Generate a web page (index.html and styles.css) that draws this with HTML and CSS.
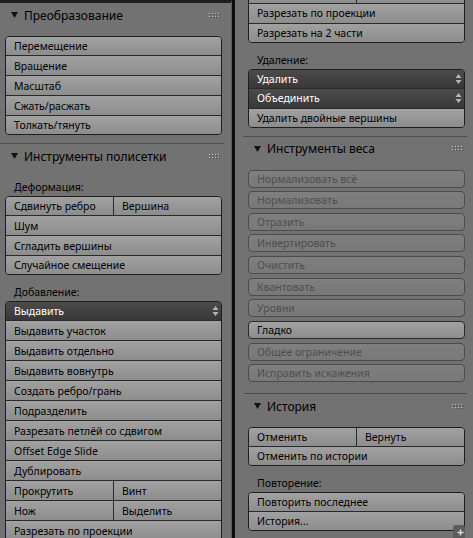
FILE: index.html
```html
<!DOCTYPE html>
<html lang="ru">
<head>
    <meta charset="UTF-8">
    <meta name="viewport" content="width=device-width, initial-scale=1.0">
    <title>Панель инструментов</title>
    <link rel="stylesheet" href="styles.css">
</head>
<body>
<div class="screen">

    <!-- left tool shelf: top of the list -->
    <div class="area area-left">
        <div class="shelf">
            <section class="panel panel-first">
                <header class="panel-head">
                    <svg class="tri" width="7" height="6" viewBox="0 0 7 6"><polygon points="0,0 7,0 3.5,6" /></svg>
                    <span class="panel-title">Преобразование</span>
                    <svg class="grip" width="11" height="5" viewBox="0 0 11 5">
                        <g fill="#4c4c4c"><rect x="1" y="1" width="1" height="1"/><rect x="4" y="1" width="1" height="1"/><rect x="7" y="1" width="1" height="1"/><rect x="10" y="1" width="1" height="1"/><rect x="1" y="4" width="1" height="1"/><rect x="4" y="4" width="1" height="1"/><rect x="7" y="4" width="1" height="1"/><rect x="10" y="4" width="1" height="1"/></g>
                        <g fill="#c4c4c4"><rect x="0" y="0" width="1" height="1"/><rect x="3" y="0" width="1" height="1"/><rect x="6" y="0" width="1" height="1"/><rect x="9" y="0" width="1" height="1"/><rect x="0" y="3" width="1" height="1"/><rect x="3" y="3" width="1" height="1"/><rect x="6" y="3" width="1" height="1"/><rect x="9" y="3" width="1" height="1"/></g>
                    </svg>
                </header>
                <div class="panel-body">
                    <div class="stack">
                        <div class="btn">Перемещение</div>
                        <div class="btn">Вращение</div>
                        <div class="btn">Масштаб</div>
                        <div class="btn">Сжать/расжать</div>
                        <div class="btn">Толкать/тянуть</div>
                    </div>
                </div>
            </section>

            <section class="panel">
                <header class="panel-head">
                    <svg class="tri" width="7" height="6" viewBox="0 0 7 6"><polygon points="0,0 7,0 3.5,6" /></svg>
                    <span class="panel-title">Инструменты полисетки</span>
                    <svg class="grip" width="11" height="5" viewBox="0 0 11 5">
                        <g fill="#4c4c4c"><rect x="1" y="1" width="1" height="1"/><rect x="4" y="1" width="1" height="1"/><rect x="7" y="1" width="1" height="1"/><rect x="10" y="1" width="1" height="1"/><rect x="1" y="4" width="1" height="1"/><rect x="4" y="4" width="1" height="1"/><rect x="7" y="4" width="1" height="1"/><rect x="10" y="4" width="1" height="1"/></g>
                        <g fill="#c4c4c4"><rect x="0" y="0" width="1" height="1"/><rect x="3" y="0" width="1" height="1"/><rect x="6" y="0" width="1" height="1"/><rect x="9" y="0" width="1" height="1"/><rect x="0" y="3" width="1" height="1"/><rect x="3" y="3" width="1" height="1"/><rect x="6" y="3" width="1" height="1"/><rect x="9" y="3" width="1" height="1"/></g>
                    </svg>
                </header>
                <div class="panel-body">
                    <div class="label">Деформация:</div>
                    <div class="stack">
                        <div class="row">
                            <div class="btn">Сдвинуть ребро</div>
                            <div class="btn">Вершина</div>
                        </div>
                        <div class="btn">Шум</div>
                        <div class="btn">Сгладить вершины</div>
                        <div class="btn">Случайное смещение</div>
                    </div>

                    <div class="label">Добавление:</div>
                    <div class="stack">
                        <div class="btn menu">
                            <span>Выдавить</span>
                            <svg class="updown" width="7" height="12" viewBox="0 0 7 12"><polygon points="0.5,5 3.5,1 6.5,5" /><polygon points="0.5,7 3.5,11 6.5,7" /></svg>
                        </div>
                        <div class="btn">Выдавить участок</div>
                        <div class="btn">Выдавить отдельно</div>
                        <div class="btn">Выдавить вовнутрь</div>
                        <div class="btn">Создать ребро/грань</div>
                        <div class="btn">Подразделить</div>
                        <div class="btn">Разрезать петлёй со сдвигом</div>
                        <div class="btn">Offset Edge Slide</div>
                        <div class="btn">Дублировать</div>
                        <div class="row">
                            <div class="btn">Прокрутить</div>
                            <div class="btn">Винт</div>
                        </div>
                        <div class="row">
                            <div class="btn">Нож</div>
                            <div class="btn">Выделить</div>
                        </div>
                        <div class="btn">Разрезать по проекции</div>
                        <div class="btn">Разрезать на 2 части</div>
                    </div>
                </div>
            </section>
        </div>
    </div>

    <div class="area-split"></div>

    <!-- right tool shelf: same list scrolled further down -->
    <div class="area area-right">
        <div class="shelf shelf-scrolled">
            <section class="panel panel-cont">
                <div class="stack">
                    <div class="row">
                        <div class="btn">Нож</div>
                        <div class="btn">Выделить</div>
                    </div>
                    <div class="btn">Разрезать по проекции</div>
                    <div class="btn">Разрезать на 2 части</div>
                </div>

                <div class="label">Удаление:</div>
                <div class="stack">
                    <div class="btn menu">
                        <span>Удалить</span>
                        <svg class="updown" width="7" height="12" viewBox="0 0 7 12"><polygon points="0.5,5 3.5,1 6.5,5" /><polygon points="0.5,7 3.5,11 6.5,7" /></svg>
                    </div>
                    <div class="btn menu">
                        <span>Объединить</span>
                        <svg class="updown" width="7" height="12" viewBox="0 0 7 12"><polygon points="0.5,5 3.5,1 6.5,5" /><polygon points="0.5,7 3.5,11 6.5,7" /></svg>
                    </div>
                    <div class="btn">Удалить двойные вершины</div>
                </div>
            </section>

            <section class="panel">
                <header class="panel-head">
                    <svg class="tri" width="7" height="6" viewBox="0 0 7 6"><polygon points="0,0 7,0 3.5,6" /></svg>
                    <span class="panel-title">Инструменты веса</span>
                    <svg class="grip" width="11" height="5" viewBox="0 0 11 5">
                        <g fill="#4c4c4c"><rect x="1" y="1" width="1" height="1"/><rect x="4" y="1" width="1" height="1"/><rect x="7" y="1" width="1" height="1"/><rect x="10" y="1" width="1" height="1"/><rect x="1" y="4" width="1" height="1"/><rect x="4" y="4" width="1" height="1"/><rect x="7" y="4" width="1" height="1"/><rect x="10" y="4" width="1" height="1"/></g>
                        <g fill="#c4c4c4"><rect x="0" y="0" width="1" height="1"/><rect x="3" y="0" width="1" height="1"/><rect x="6" y="0" width="1" height="1"/><rect x="9" y="0" width="1" height="1"/><rect x="0" y="3" width="1" height="1"/><rect x="3" y="3" width="1" height="1"/><rect x="6" y="3" width="1" height="1"/><rect x="9" y="3" width="1" height="1"/></g>
                    </svg>
                </header>
                <div class="panel-body">
                    <div class="tools">
                        <div class="btn disabled">Нормализовать всё</div>
                        <div class="btn disabled">Нормализовать</div>
                        <div class="btn disabled">Отразить</div>
                        <div class="btn disabled">Инвертировать</div>
                        <div class="btn disabled">Очистить</div>
                        <div class="btn disabled">Квантовать</div>
                        <div class="btn disabled">Уровни</div>
                        <div class="btn">Гладко</div>
                        <div class="btn disabled">Общее ограничение</div>
                        <div class="btn disabled">Исправить искажения</div>
                    </div>
                </div>
            </section>

            <section class="panel">
                <header class="panel-head">
                    <svg class="tri" width="7" height="6" viewBox="0 0 7 6"><polygon points="0,0 7,0 3.5,6" /></svg>
                    <span class="panel-title">История</span>
                    <svg class="grip" width="11" height="5" viewBox="0 0 11 5">
                        <g fill="#4c4c4c"><rect x="1" y="1" width="1" height="1"/><rect x="4" y="1" width="1" height="1"/><rect x="7" y="1" width="1" height="1"/><rect x="10" y="1" width="1" height="1"/><rect x="1" y="4" width="1" height="1"/><rect x="4" y="4" width="1" height="1"/><rect x="7" y="4" width="1" height="1"/><rect x="10" y="4" width="1" height="1"/></g>
                        <g fill="#c4c4c4"><rect x="0" y="0" width="1" height="1"/><rect x="3" y="0" width="1" height="1"/><rect x="6" y="0" width="1" height="1"/><rect x="9" y="0" width="1" height="1"/><rect x="0" y="3" width="1" height="1"/><rect x="3" y="3" width="1" height="1"/><rect x="6" y="3" width="1" height="1"/><rect x="9" y="3" width="1" height="1"/></g>
                    </svg>
                </header>
                <div class="panel-body">
                    <div class="stack">
                        <div class="row">
                            <div class="btn">Отменить</div>
                            <div class="btn">Вернуть</div>
                        </div>
                        <div class="btn">Отменить по истории</div>
                    </div>

                    <div class="label">Повторение:</div>
                    <div class="stack">
                        <div class="btn">Повторить последнее</div>
                        <div class="btn">История...</div>
                    </div>
                </div>
            </section>
        </div>

        <div class="corner">
            <svg width="7" height="7" viewBox="0 0 7 7"><path d="M3.5 0.5v6M0.5 3.5h6" stroke="#d8d8d8" stroke-width="1.6" /></svg>
        </div>
    </div>

</div>
</body>
</html>
```

FILE: styles.css
```css
* {
    box-sizing: border-box;
}
body {
    margin: 0;
    width: 473px;
    height: 538px;
    overflow: hidden;
    background-color: #727272;
    font-family: "Noto Sans", "DejaVu Sans", sans-serif;
    font-size: 10.5px;
    color: #000;
}
.screen {
    display: flex;
    height: 538px;
}

/* areas */
.area {
    position: relative;
    overflow: hidden;
    background-color: #727272;
}
.area-left {
    width: 232px;
    border-top: 3px solid #1e1e1e;
    border-right: 1px solid #5a5a5a;
}
.area-split {
    width: 3px;
    background-color: #0c0c0c;
}
.area-right {
    flex: 1;
}
.shelf {
    padding-left: 8px;
}
.area-left .shelf {
    margin-left: -8px;
}
.shelf-scrolled {
    margin-top: -16.5px;
}

/* panels */
.panel {
    width: 224px;
    border-top: 1px solid #4e4e4e;
    padding: 0 2px 8px 5px;
}
.panel-first,
.panel-cont {
    border-top: 0;
}
.panel-head {
    height: 24px;
    display: flex;
    align-items: center;
    font-size: 12px;
}
.tri {
    margin-left: 6px;
    margin-right: 6px;
    fill: #111;
}
.grip {
    margin-left: auto;
    margin-right: 2px;
}
.panel-body {
    padding-top: 9px;
}
.label {
    height: 19px;
    display: flex;
    align-items: flex-end;
    padding: 0 0 2px 9px;
    margin-top: 7px;
    line-height: 13px;
}
.panel-body > .label:first-child {
    margin-top: 0;
}

/* buttons */
.btn {
    display: flex;
    align-items: center;
    padding-left: 8px;
    white-space: nowrap;
    background: linear-gradient(#a1a1a1, #8d8d8d);
}
.stack {
    border: 1px solid #1e1e1e;
    border-radius: 4px;
    overflow: hidden;
}
.stack > * {
    height: 20px;
    border-top: 1px solid #2a2a2a;
}
.stack > :first-child {
    height: 18px;
    border-top: 0;
}
.stack > :last-child:not(:first-child) {
    height: 19px;
}
.row {
    display: flex;
}
.row > .btn {
    flex: 1;
    height: 100%;
}
.row > .btn + .btn {
    border-left: 1px solid #2a2a2a;
}
.menu {
    justify-content: space-between;
    padding-right: 2px;
    color: #fff;
    background: linear-gradient(#4b4b4b, #383838);
}
.updown {
    fill: #b4b4b4;
}

/* weight tools: separate buttons */
.tools {
    display: flex;
    flex-direction: column;
    gap: 3.67px;
    margin-bottom: 3px;
}
.tools .btn {
    height: 18px;
    border: 1px solid #2a2a2a;
    border-radius: 4px;
}
.tools .btn.disabled {
    color: #4e4e4e;
    border-color: #4c4c4c;
    background: linear-gradient(#7f7f7f, #787878);
}

/* area corner action zone */
.corner {
    position: absolute;
    right: 8px;
    bottom: 0;
    width: 12px;
    height: 13px;
    border-radius: 3px 3px 0 0;
    background-color: #5c5c5c;
    display: flex;
    align-items: flex-end;
    justify-content: flex-end;
    padding: 0 1px 2px 0;
}
```
